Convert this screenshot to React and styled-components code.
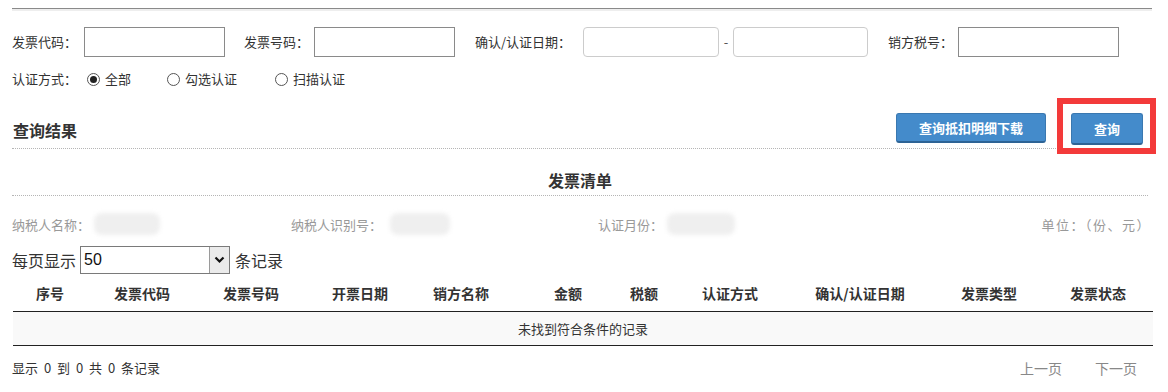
import React from "react";
import styled, { createGlobalStyle } from "styled-components";

const GlobalStyle = createGlobalStyle`
  body {
    margin: 0;
    background: #fff;
    font-family: "Noto Sans CJK SC", "Liberation Sans", sans-serif;
    font-size: 13px;
    color: #333;
  }
`;

const Page = styled.div`
  width: 1141px;
  padding: 8px 0 0 12px;
`;

const TopRule = styled.div`
  height: 0;
  width: 1140px;
  border-top: 1px solid #8a8a8a;
  border-bottom: 2px solid #eeeeee;
`;

const FormRow = styled.div`
  display: flex;
  align-items: center;
  margin-top: ${(p) => p.$mt || 0}px;
  height: ${(p) => p.$h || 29}px;
`;

const Field = styled.div`
  display: flex;
  align-items: center;
  margin-right: ${(p) => p.$mr || 0}px;
`;

const Label = styled.span`
  display: inline-block;
  width: ${(p) => (p.$w ? `${p.$w}px` : "auto")};
  white-space: nowrap;
  line-height: 20px;
  color: #333;
`;

const TextInput = styled.input`
  box-sizing: border-box;
  width: ${(p) => p.$w}px;
  height: 30px;
  border: 1px solid ${(p) => (p.$soft ? "#cccccc" : "#8a8a8a")};
  border-radius: ${(p) => (p.$soft ? 4 : 0)}px;
  padding: 0 6px;
  font-family: inherit;
  font-size: 13px;
  outline: none;
  background: #fff;
`;

const Dash = styled.span`
  display: inline-block;
  width: 14px;
  text-align: center;
  color: #555;
`;

const RadioItem = styled.label`
  display: flex;
  align-items: center;
  gap: 5px;
  margin-right: ${(p) => p.$mr || 0}px;
  line-height: 20px;
`;

const RadioDot = styled.span`
  box-sizing: border-box;
  width: 13px;
  height: 13px;
  border-radius: 50%;
  border: 1px solid #555;
  display: inline-flex;
  align-items: center;
  justify-content: center;
  background: #fff;
  &::after {
    content: "";
    width: 7px;
    height: 7px;
    border-radius: 50%;
    background: ${(p) => (p.$on ? "#222" : "transparent")};
  }
`;

const SectionHead = styled.div`
  margin-top: 24px;
  width: 1136px;
  height: 35px;
  display: flex;
  align-items: flex-start;
  justify-content: space-between;
  border-bottom: 1px dotted #b5b5b5;
`;

const Title = styled.h3`
  margin: 6px 0 0 1px;
  font-size: 16px;
  line-height: 22px;
  font-weight: bold;
  color: #333;
`;

const Actions = styled.div`
  display: flex;
  align-items: flex-start;
  gap: 25px;
  margin-right: 5px;
`;

const Btn = styled.button`
  box-sizing: border-box;
  height: ${(p) => p.$h || 30}px;
  padding: 0 ${(p) => p.$px || 22}px;
  background: #448bcb;
  color: #fff;
  font-family: inherit;
  font-size: 13px;
  font-weight: bold;
  border: 1px solid #3a78b0;
  border-bottom: 2px solid #2d6395;
  border-radius: 3px;
  cursor: pointer;
`;

const Marked = styled.div`
  position: relative;
`;

const RedFrame = styled.span`
  position: absolute;
  top: -15px;
  left: -14px;
  right: -13px;
  bottom: -9px;
  border: 6px solid #f33a3a;
  pointer-events: none;
`;

const ListTitle = styled.div`
  width: 1136px;
  padding: 20px 0 4px;
  text-align: center;
  font-size: 16px;
  line-height: 22px;
  font-weight: bold;
  color: #333;
  border-bottom: 1px dotted #b5b5b5;
`;

const InfoRow = styled.div`
  display: flex;
  align-items: center;
  width: 1139px;
  margin-top: 16px;
  height: 24px;
  color: #999;
`;

const InfoItem = styled.div`
  display: flex;
  align-items: center;
  width: ${(p) => (p.$w ? `${p.$w}px` : "auto")};
  flex: ${(p) => (p.$w ? "none" : 1)};
`;

const Masked = styled.span`
  display: inline-block;
  width: ${(p) => p.$w}px;
  height: 22px;
  margin-left: ${(p) => p.$ml || 0}px;
  background: #efefef;
  border-radius: 8px;
  filter: blur(2px);
`;

const Unit = styled.span`
  color: #999;
  letter-spacing: 1.5px;
`;

const SizeRow = styled.div`
  display: flex;
  align-items: center;
  height: 28px;
  margin-top: 10px;
  font-size: 16px;
  color: #333;
`;

const SelectBox = styled.div`
  box-sizing: border-box;
  width: 150px;
  height: 28px;
  margin: 0 5px 0 4px;
  display: flex;
  border: 1px solid #7a7a7a;
  background: #fff;
`;

const SelectValue = styled.span`
  flex: 1;
  padding-left: 3px;
  font-family: "Liberation Sans", sans-serif;
  font-size: 16px;
  line-height: 26px;
  color: #111;
`;

const SelectArrow = styled.span`
  width: 19px;
  display: flex;
  align-items: center;
  justify-content: center;
  border-left: 1px solid #9a9a9a;
  background: #ebebeb;
`;

const Table = styled.table`
  width: 1140px;
  table-layout: fixed;
  border-collapse: collapse;
  margin-left: 1px;
`;

const Th = styled.th`
  height: 37px;
  padding: 0;
  font-size: 14px;
  font-weight: bold;
  color: #333;
  text-align: center;
  border-bottom: 1px solid #222;
  white-space: nowrap;
`;

const EmptyCell = styled.td`
  height: 33px;
  padding: 0;
  text-align: center;
  background: #f9f9f9;
  border-bottom: 1px solid #222;
  color: #333;
`;

const Footer = styled.div`
  display: flex;
  align-items: center;
  justify-content: space-between;
  width: 1125px;
  margin-top: 12px;
  line-height: 20px;
`;

const Summary = styled.span`
  word-spacing: 3px;
`;

const Pager = styled.div`
  display: flex;
  gap: 33px;
  font-size: 14px;
  color: #888;
`;

const columns = [
  { t: "序号", w: 74 },
  { t: "发票代码", w: 110 },
  { t: "发票号码", w: 108 },
  { t: "开票日期", w: 110 },
  { t: "销方名称", w: 92 },
  { t: "金额", w: 122 },
  { t: "税额", w: 30 },
  { t: "认证方式", w: 142 },
  { t: "确认/认证日期", w: 118 },
  { t: "发票类型", w: 140 },
  { t: "发票状态", w: 94, pr: 16 },
];

function App() {
  return (
    <Page>
      <GlobalStyle />
      <TopRule />

      <FormRow $mt={16}>
        <Field $mr={19}>
          <Label $w={72}>发票代码：</Label>
          <TextInput $w={141} />
        </Field>
        <Field $mr={20}>
          <Label $w={70}>发票号码：</Label>
          <TextInput $w={141} />
        </Field>
        <Field $mr={20}>
          <Label $w={108}>确认/认证日期：</Label>
          <TextInput $w={136} $soft />
          <Dash>-</Dash>
          <TextInput $w={135} $soft />
        </Field>
        <Field>
          <Label $w={70}>销方税号：</Label>
          <TextInput $w={161} />
        </Field>
      </FormRow>

      <FormRow $mt={13} $h={20}>
        <Label $w={75}>认证方式：</Label>
        <RadioItem $mr={36}>
          <RadioDot $on />
          全部
        </RadioItem>
        <RadioItem $mr={38}>
          <RadioDot />
          勾选认证
        </RadioItem>
        <RadioItem>
          <RadioDot />
          扫描认证
        </RadioItem>
      </FormRow>

      <SectionHead>
        <Title>查询结果</Title>
        <Actions>
          <Btn $px={22}>查询抵扣明细下载</Btn>
          <Marked>
            <Btn $h={32} $px={22}>
              查询
            </Btn>
            <RedFrame />
          </Marked>
        </Actions>
      </SectionHead>

      <ListTitle>发票清单</ListTitle>

      <InfoRow>
        <InfoItem $w={279}>
          纳税人名称：
          <Masked $w={66} $ml={4} />
        </InfoItem>
        <InfoItem $w={307}>
          纳税人识别号：
          <Masked $w={60} $ml={8} />
        </InfoItem>
        <InfoItem>
          认证月份：
          <Masked $w={68} $ml={4} />
        </InfoItem>
        <Unit>单位：（份、元）</Unit>
      </InfoRow>

      <SizeRow>
        每页显示
        <SelectBox>
          <SelectValue>50</SelectValue>
          <SelectArrow>
            <svg width="11" height="8" viewBox="0 0 11 8">
              <path d="M1.5 1.5 L5.5 5.5 L9.5 1.5" fill="none" stroke="#111" strokeWidth="2.2" />
            </svg>
          </SelectArrow>
        </SelectBox>
        条记录
      </SizeRow>

      <Table>
        <colgroup>
          {columns.map((c) => (
            <col key={c.t} style={{ width: c.w }} />
          ))}
        </colgroup>
        <thead>
          <tr>
            {columns.map((c) => (
              <Th key={c.t} style={c.pr ? { paddingRight: c.pr } : undefined}>
                {c.t}
              </Th>
            ))}
          </tr>
        </thead>
        <tbody>
          <tr>
            <EmptyCell colSpan={columns.length}>未找到符合条件的记录</EmptyCell>
          </tr>
        </tbody>
      </Table>

      <Footer>
        <Summary>显示 0 到 0 共 0 条记录</Summary>
        <Pager>
          <span>上一页</span>
          <span>下一页</span>
        </Pager>
      </Footer>
    </Page>
  );
}

export default App;
